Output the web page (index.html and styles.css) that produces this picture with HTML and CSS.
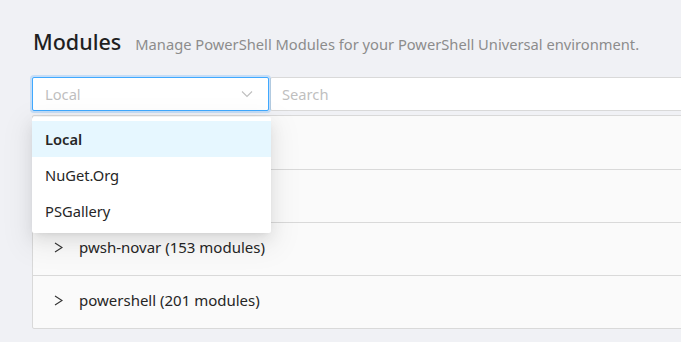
FILE: index.html
```html
<!DOCTYPE html>
<html lang="en">
<head>
    <meta charset="UTF-8">
    <meta name="viewport" content="width=device-width, initial-scale=1.0">
    <link rel="stylesheet" href="styles.css">
    <title>Modules</title>
</head>
<body>

    <div class="page">
        <div class="page-header">
            <h2>Modules</h2>
            <span class="subtitle">Manage PowerShell Modules for your PowerShell Universal environment.</span>
        </div>

        <div class="toolbar">
            <div class="select-wrap">
                <div class="select">
                    <span class="select-value">Local</span>
                    <svg class="select-arrow" width="12" height="12" viewBox="0 0 12 12">
                        <path d="M1 3.5 L6 8.5 L11 3.5" fill="none" stroke="#bfbfbf" stroke-width="1.1"/>
                    </svg>
                </div>
                <ul class="dropdown">
                    <li class="option active">Local</li>
                    <li class="option">NuGet.Org</li>
                    <li class="option">PSGallery</li>
                </ul>
            </div>
            <input class="search" type="text" placeholder="Search">
        </div>

        <!-- les deux premiers panneaux sont caches par le menu -->
        <div class="collapse">
            <div class="panel"></div>
            <div class="panel"></div>
            <div class="panel">
                <svg class="chevron" width="9" height="11" viewBox="0 0 9 11"><path d="M1 1 L8 5.5 L1 10" fill="none" stroke="#333" stroke-width="1.1"/></svg>
                <span>pwsh-novar (153 modules)</span>
            </div>
            <div class="panel">
                <svg class="chevron" width="9" height="11" viewBox="0 0 9 11"><path d="M1 1 L8 5.5 L1 10" fill="none" stroke="#333" stroke-width="1.1"/></svg>
                <span>powershell (201 modules)</span>
            </div>
        </div>
    </div>

</body>
</html>
```

FILE: styles.css
```css
body {
    margin: 0;
    background-color: #f0f1f5;
    font-family: 'Noto Sans', sans-serif;
    color: rgba(0, 0, 0, 0.85);
    font-size: 14.7px;
    overflow: hidden;
}

.page {
    padding: 27px 0 0 33px;
    width: 720px;
}

.page-header {
    display: flex;
    align-items: baseline;
    gap: 14px;
    height: 34px;
}

h2 {
    margin: 0;
    font-size: 21.5px;
    font-weight: 500;
    color: #1f1f1f;
}

.subtitle {
    color: #8c8c8c;
    font-size: 14.7px;
}

.toolbar {
    display: flex;
    margin-top: 16px;
}

.select-wrap {
    position: relative;
}

.select {
    box-sizing: border-box;
    width: 237px;
    height: 34px;
    margin-left: -1px;
    background: #fff;
    border: 1px solid #40a9ff;
    border-radius: 2px;
    box-shadow: 0 0 0 2px rgba(24, 144, 255, 0.2);
    display: flex;
    align-items: center;
    padding: 0 15px 0 12px;
}

.select-value {
    flex: 1;
    color: #bfbfbf;
}

/* Menu deroulant ouvert */
.dropdown {
    position: absolute;
    top: 40px;
    left: -1px;
    width: 239px;
    margin: 0;
    padding: 4px 0;
    list-style: none;
    background: #fff;
    border-radius: 2px;
    box-shadow: 0 3px 6px -4px rgba(0, 0, 0, 0.12), 0 6px 16px 0 rgba(0, 0, 0, 0.08), 0 9px 28px 8px rgba(0, 0, 0, 0.05);
    z-index: 10;
}

.option {
    height: 36px;
    line-height: 36px;
    padding: 0 13px;
    color: #262626;
}

.option.active {
    background: #e6f7ff;
    font-weight: 600;
}

.search {
    box-sizing: border-box;
    flex: 1;
    height: 34px;
    margin-left: 1px;
    border: 1px solid #d9d9d9;
    border-radius: 2px;
    padding: 0 11px;
    font-family: inherit;
    font-size: 14.7px;
    background: #fff;
    outline: none;
}

.search::placeholder {
    color: #bfbfbf;
}

.collapse {
    margin-top: 4px;
    margin-left: -1px;
    background: #fafafa;
    border: 1px solid #d9d9d9;
    border-radius: 2px;
}

.panel {
    box-sizing: border-box;
    height: 53px;
    display: flex;
    align-items: center;
    padding: 0 0 4px 21px;
    gap: 16px;
    border-bottom: 1px solid #d9d9d9;
    color: #262626;
    font-size: 15px;
}

.panel:first-child {
    height: 54px;
}

.panel:last-child {
    border-bottom: none;
    height: 52px;
}
```
